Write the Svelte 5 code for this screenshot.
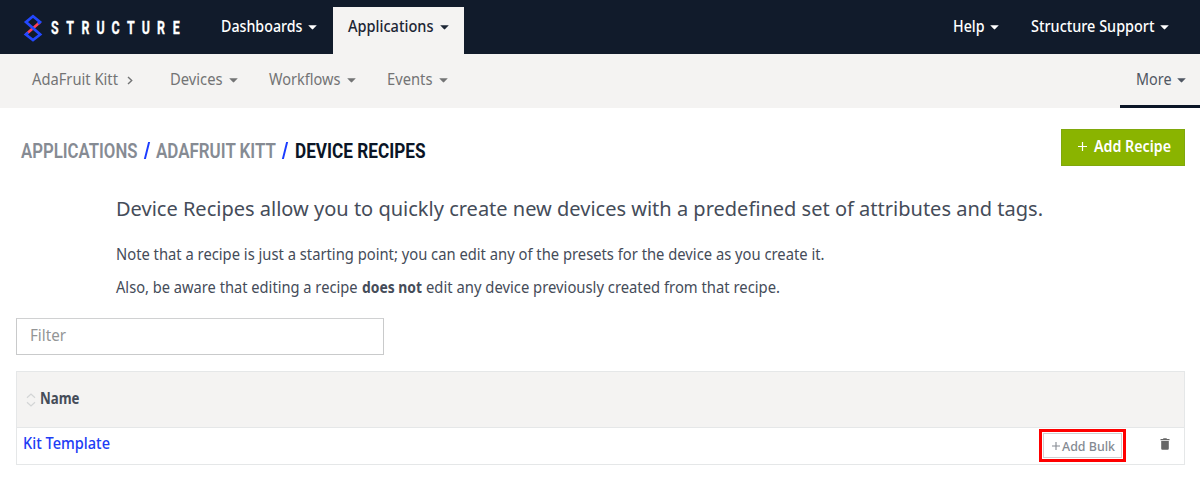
<script>
  const mainLinks = [
    { text: 'Dashboards', width: 81.5 },
    { text: 'Applications', width: 85.5, active: true }
  ];
  const userLinks = [
    { text: 'Help', width: 31.5 },
    { text: 'Structure Support', width: 123.5 }
  ];
  const subLinks = [
    { text: 'Devices', width: 52.5 },
    { text: 'Workflows', width: 71.5 },
    { text: 'Events', width: 45.5 }
  ];
  const logoLetters = [51, 66.3, 81.4, 96.4, 111.5, 127, 141.8, 157, 172.8];
</script>

{#snippet label(text, width, size = 15.6, weight = 500)}
  <svg class="label" {width} height="20">
    <text y="15" textLength={width} lengthAdjust="spacingAndGlyphs" font-size={size} font-weight={weight}>{text}</text>
  </svg>
{/snippet}

{#snippet caret()}
  <svg class="caret" width="9" height="5" viewBox="0 0 9 5"><path d="M.2 .2H8.8L5.2 4.1Q4.5 4.7 3.8 4.1Z" /></svg>
{/snippet}

<header class="topbar">
  <svg class="logo" width="200" height="54" viewBox="0 0 200 54" aria-label="Structure">
    <g fill="none" stroke-width="2.7">
      <path d="M39.9 22.3L25.8 34.5" stroke="#ff4055" />
      <path d="M38 23.7L40 22L33 16.3L26 22L40.2 34.5L33 40L25.8 34.5L28.2 32.4" stroke="#2348ff" />
    </g>
    <g transform="scale(.69 1)">
      {#each 'STRUCTURE'.split('') as ch, i}
        <text class="letter" x={logoLetters[i] / 0.69} y="34.5">{ch}</text>
      {/each}
    </g>
  </svg>
  <nav class="main">
    {#each mainLinks as l}
      <a class:active={l.active} href="#top">{@render label(l.text, l.width)}{@render caret()}</a>
    {/each}
  </nav>
  <nav class="user">
    {#each userLinks as l}
      <a href="#top">{@render label(l.text, l.width)}{@render caret()}</a>
    {/each}
  </nav>
</header>

<nav class="subbar">
  <a class="crumb" href="#top">
    {@render label('AdaFruit Kitt', 86, 15.6, 400)}
    <svg width="6" height="9" viewBox="0 0 6 9"><path d="M1 1L4.7 4.5L1 8" fill="none" stroke="#737475" stroke-width="1.4" /></svg>
  </a>
  {#each subLinks as l}
    <a href="#top">{@render label(l.text, l.width, 15.6, 400)}{@render caret()}</a>
  {/each}
  <a class="more" href="#top">{@render label('More', 35.5, 15.6, 400)}{@render caret()}</a>
</nav>

<main>
  <div class="heading">
    <h1>
      <span>{@render label('APPLICATIONS', 116.5, 21, 600)}</span>
      <i></i>
      <span>{@render label('ADAFRUIT KITT', 120, 21, 600)}</span>
      <i></i>
      <span class="current">{@render label('DEVICE RECIPES', 130.5, 21, 700)}</span>
    </h1>
    <button class="add">
      <svg width="9" height="9" viewBox="0 0 9 9"><path d="M4.5 0V9M0 4.5H9" stroke="#fff" stroke-width="1.2" /></svg>
      {@render label('Add Recipe', 77, 15.6, 600)}
    </button>
  </div>

  <section class="intro">
    {@render label('Device Recipes allow you to quickly create new devices with a predefined set of attributes and tags.', 927, 20.5, 400)}
    {@render label('Note that a recipe is just a starting point; you can edit any of the presets for the device as you create it.', 708.5, 15.6, 400)}
    <p>
      {@render label('Also, be aware that editing a recipe', 241.5, 15.6, 400)}
      {@render label('does not', 60, 15.6, 700)}
      {@render label('edit any device previously created from that recipe.', 354, 15.6, 400)}
    </p>
  </section>

  <div class="filter">{@render label('Filter', 36, 15.6, 400)}</div>

  <div class="table">
    <div class="thead">
      <svg width="10" height="14" viewBox="0 0 10 14"><path d="M1 4.8L5 1L9 4.8M1 9.2L5 13L9 9.2" fill="none" stroke="#d3d5d6" stroke-width="1.2" /></svg>
      {@render label('Name', 39.5, 15.4, 700)}
    </div>
    <div class="row">
      <a href="#kit">{@render label('Kit Template', 87, 15.6, 500)}</a>
      <div class="highlight">
        <button class="bulk">
          <svg width="8" height="8" viewBox="0 0 8 8"><path d="M4 0V8M0 4H8" stroke="#858a92" stroke-width="1.1" /></svg>
          {@render label('Add Bulk', 53, 13.4, 500)}
        </button>
      </div>
      <svg class="trash" width="10" height="12" viewBox="0 0 10 12"><path d="M.5 1H3L3.5.3H6.5L7 1H9.5V2.2H.5ZM1.2 3H8.8V10.5Q8.8 11.7 7.7 11.7H2.3Q1.2 11.7 1.2 10.5Z" fill="#666" /></svg>
    </div>
  </div>
</main>

<style>
  :global(body) { background: #fff; font-family: 'Noto Sans', sans-serif; }
  svg { display: block; flex: none; }
  .label { overflow: visible; }
  .label text { fill: currentColor; white-space: pre; }
  .caret { fill: currentColor; margin-left: 6px; }
  a { color: inherit; text-decoration: none; display: flex; align-items: center; }
  button { font: inherit; cursor: pointer; }
  .topbar { height: 54px; background: #111b2b; color: #fff; display: flex; }
  .letter { font: 700 18px Roboto, sans-serif; fill: #fff; stroke: #fff; stroke-width: .3px; }
  .main, .user { display: flex; align-items: flex-end; }
  .main a, .user a { height: 47px; padding-bottom: 7px; box-sizing: border-box; }
  .main a { padding-left: 20.5px; padding-right: 16px; }
  .main a.active { background: #f4f3f2; color: #1c2635; padding-left: 15px; width: 131px; padding-right: 0; }
  .user { margin-left: auto; padding-right: 31px; gap: 31.5px; }
  .subbar { height: 54px; box-sizing: border-box; background: #f4f3f2; color: #737475; display: flex; padding-left: 32px; gap: 31.5px; }
  .subbar a { padding-bottom: 2px; }
  .subbar .crumb { gap: 9px; margin-right: 5.5px; }
  .subbar .more { margin-left: auto; width: 80px; box-sizing: border-box; padding: 3px 0 2px 15.5px; border-bottom: 3px solid #0a1526; color: #505763; }
  main { padding: 21px 15px 0 16px; }
  .heading { display: flex; justify-content: space-between; }
  h1 { font: 600 21px Roboto, sans-serif; color: #868b93; display: flex; margin: 14px 0 0 5px; height: 20px; }
  h1 .current { color: #0a1526; }
  h1 i { width: 1.8px; height: 17px; background: #1b3cff; transform: skewX(-14deg); margin: -1px 9px 0 8px; }
  .add { width: 124px; height: 37px; display: flex; align-items: center; gap: 7px; padding: 0 0 2px 16px; border: 1px solid #80a80c; background: #8ab400; color: #fff; }
  .intro { color: #454c59; padding-left: 100px; margin-top: 35px; display: grid; }
  .intro .label:nth-child(2) { margin-top: 24px; }
  .intro p { display: flex; gap: 4.3px; margin: 12.5px 0 0; }
  .intro p .label:nth-child(n) { margin-top: 0; }
  .filter { width: 368px; height: 37px; box-sizing: border-box; border: 1px solid #c9cacb; border-top-color: #d0d1d2; margin-top: 20.5px; padding: 7px 13px; color: #939596; }
  .table { border: 1px solid #e5e7e8; margin-top: 16px; }
  .thead { height: 55px; background: #f4f3f2; border-bottom: 1px solid #e5e7e8; display: flex; align-items: center; padding-left: 9px; gap: 4px; color: #454c59; }
  .thead .label { margin-top: -2px; }
  .row { height: 36px; display: flex; align-items: center; padding-left: 5.5px; color: #203cf5; }
  .row > a { padding-bottom: 5px; }
  .highlight { margin-left: auto; margin-top: -1px; box-sizing: border-box; width: 87px; height: 33px; border: 3px solid #f00; padding: 1px; display: flex; }
  .bulk { width: 79px; height: 25px; background: #fff; border: 1px solid #cfd0d2; color: #858a92; display: flex; align-items: center; gap: 2px; padding: 0 0 0 8px; box-sizing: border-box; }
  .trash { margin: 0 14px 4px 34px; }
</style>
